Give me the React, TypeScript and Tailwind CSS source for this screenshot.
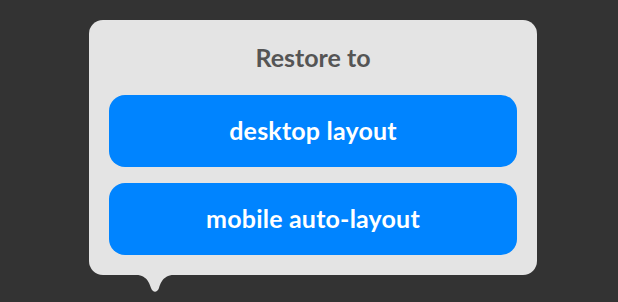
export default function App() {
  return (
    <div
      className="w-full h-screen bg-[#333333] pl-[89px] pt-[20px]"
      style={{ fontFamily: "Lato, 'Noto Sans', sans-serif" }}
    >
      <div className="relative w-[448px] h-[255px] rounded-[14px] bg-[#e4e4e4] flex flex-col px-5 pb-5">
        <div className="h-[76px] flex items-center justify-center text-[25px] font-bold text-[#555555]">
          Restore to
        </div>
        <div className="flex flex-col gap-4">
          <button className="h-[72px] rounded-[16px] bg-[#0084ff] text-white text-[25px] font-bold tracking-[0.2px]">
            desktop layout
          </button>
          <button className="h-[72px] rounded-[16px] bg-[#0084ff] text-white text-[25px] font-bold tracking-[0.2px]">
            mobile auto-layout
          </button>
        </div>
        <svg
          className="absolute left-[39px] top-[254px]"
          width="54"
          height="20"
          viewBox="0 0 54 20"
        >
          <path
            d="M0 0 C17 0 20 5 23 14 C25 19 29 19 31 14 C34 5 37 0 54 0 Z"
            fill="#e4e4e4"
          />
        </svg>
      </div>
    </div>
  );
}
